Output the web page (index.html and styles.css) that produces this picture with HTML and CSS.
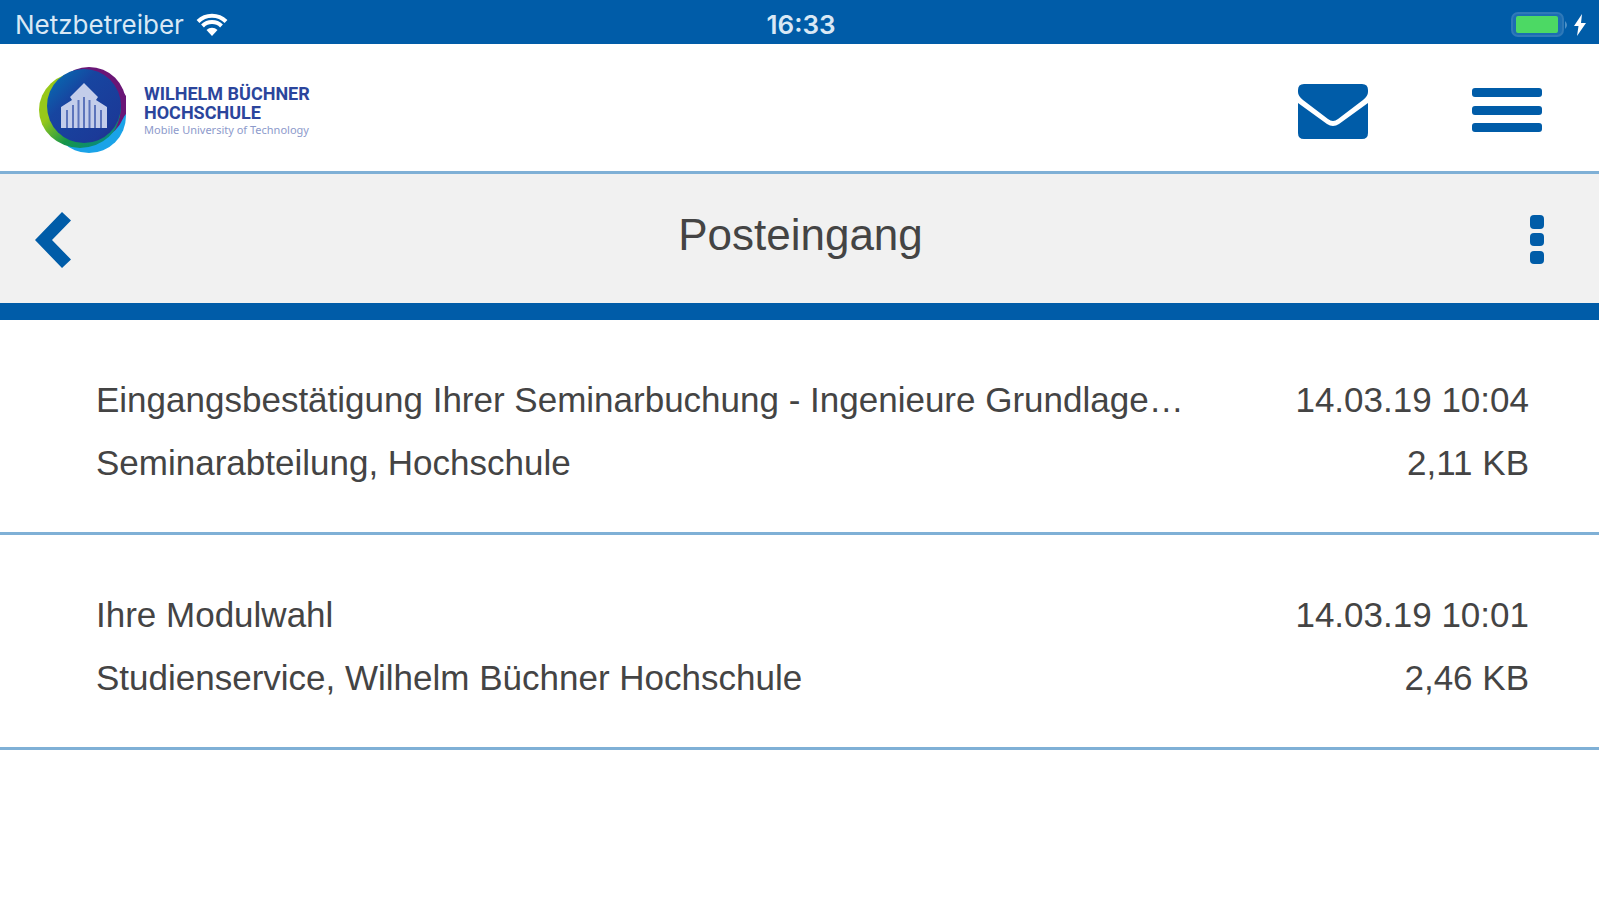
FILE: index.html
```html
<!DOCTYPE html>
<html lang="de">
<head>
<meta charset="utf-8">
<meta name="viewport" content="width=device-width, initial-scale=1">
<title>Posteingang</title>
<link rel="stylesheet" href="styles.css">
</head>
<body>
<div class="status-bar">
  <div class="status-carrier">
    <span>Netzbetreiber</span>
    <svg class="wifi-icon" viewBox="0 0 32 24" aria-hidden="true">
      <path d="M2 8.500a20 20 0 0 1 28 0" />
      <path d="M6.500 13a13.500 13.500 0 0 1 19 0" />
      <path class="wifi-dot" d="M16 23l-5.500-6a8 8 0 0 1 11 0z" />
    </svg>
  </div>
  <time class="status-time">16:33</time>
  <div class="status-power">
    <svg class="battery-icon" viewBox="0 0 58 26" aria-hidden="true">
      <rect x="1" y="1" width="51" height="23" rx="6" fill="#1c6db3" stroke="#2f79b8" stroke-width="2" />
      <rect x="5" y="4" width="42" height="17" rx="2" fill="#4cd964" />
      <path d="M54 9q4 4 0 8z" fill="#4f91c6" />
    </svg>
    <svg class="bolt-icon" viewBox="0 0 14 22" aria-hidden="true">
      <path d="M9 0L1 12h4.500L4 22l9-13H8z" />
    </svg>
  </div>
</div>

<header class="app-header">
  <a class="brand" href="#">
    <svg class="brand-mark" viewBox="0 0 90 90" aria-hidden="true">
      <defs>
        <linearGradient id="disc" x1="0" y1="0" x2="1" y2="1">
          <stop offset="0.100" stop-color="#0868b0" />
          <stop offset="0.350" stop-color="#1745a0" />
          <stop offset="0.800" stop-color="#1b3a98" />
          <stop offset="1" stop-color="#2a2380" />
        </linearGradient>
        <linearGradient id="ring" x1="0" y1="0" x2="1" y2="1">
          <stop offset="0.350" stop-color="#97c81a" />
          <stop offset="0.620" stop-color="#16964a" />
          <stop offset="0.850" stop-color="#0a8a78" />
        </linearGradient>
      </defs>
      <circle cx="51" cy="50" r="37" fill="#1aa3e8" />
      <circle cx="51" cy="38" r="37" fill="#6a1676" />
      <ellipse cx="42" cy="44" rx="41" ry="38" fill="url(#ring)" />
      <path d="M45 1A37 37 0 0 1 83 40Q83 52 78 61L88 48V30L70 4z" fill="#6a1676" clip-path="circle(37px at 51px 38px)" />
      <circle cx="46" cy="40" r="37" fill="url(#disc)" />
      <path d="M46 17L60 31L58 34L69 41V62H23V41L34 34L32 31z" fill="#c3cdea" />
      <path d="M29 44v18M35 39v23M40.500 34v28M46 31v31M51.500 34v28M57 39v23M63 44v18" stroke="#5c74bb" stroke-width="2" />
    </svg>
    <span class="brand-text">
      <strong class="brand-name">WILHELM BÜCHNER<br>HOCHSCHULE</strong>
      <small class="brand-claim">Mobile University of Technology</small>
    </span>
  </a>
  <nav class="header-actions">
    <button class="icon-button" type="button" aria-label="Nachrichten">
      <svg class="icon" viewBox="0 0 70 56" aria-hidden="true">
        <path d="M6 1h58q6 0 6 6v2q0 4-5 8L40 36q-5 4-10 0L5 17Q0 13 0 9V7Q0 1 6 1zM0 20l29 21q6 4 12 0l29-21v30q0 6-6 6H6q-6 0-6-6z" />
      </svg>
    </button>
    <button class="icon-button" type="button" aria-label="Menü">
      <svg class="icon" viewBox="0 0 70 56" aria-hidden="true">
        <rect y="5" width="70" height="9" rx="3" />
        <rect y="23" width="70" height="9" rx="3" />
        <rect y="40" width="70" height="9" rx="3" />
      </svg>
    </button>
  </nav>
</header>

<div class="toolbar">
  <button class="icon-button" type="button" aria-label="Zurück">
    <svg class="back-icon" viewBox="0 0 36 56" aria-hidden="true">
      <path d="M27 0l9 8.500L17 28l19 19.500L27 56 0 28z" />
    </svg>
  </button>
  <h1 class="toolbar-title">Posteingang</h1>
  <button class="icon-button" type="button" aria-label="Weitere Optionen">
    <svg class="more-icon" viewBox="0 0 14 50" aria-hidden="true">
      <rect width="14" height="14" rx="4" />
      <rect y="18" width="14" height="13" rx="4" />
      <rect y="36" width="14" height="13" rx="4" />
    </svg>
  </button>
</div>

<main>
  <ul class="mail-list">
    <li>
      <a class="mail" href="#">
        <span class="mail-subject">Eingangsbestätigung Ihrer Seminarbuchung - Ingenieure Grundlage…</span>
        <time class="mail-date">14.03.19 10:04</time>
        <span class="mail-sender">Seminarabteilung, Hochschule</span>
        <span class="mail-size">2,11 KB</span>
      </a>
    </li>
    <li>
      <a class="mail" href="#">
        <span class="mail-subject">Ihre Modulwahl</span>
        <time class="mail-date">14.03.19 10:01</time>
        <span class="mail-sender">Studienservice, Wilhelm Büchner Hochschule</span>
        <span class="mail-size">2,46 KB</span>
      </a>
    </li>
  </ul>
</main>
</body>
</html>
```
FILE: styles.css
```css
:root {
  --blue: #005ca8;
  --line: #7fb0d6;
  --text: #444;
}

* {
  box-sizing: border-box;
}

body {
  margin: 0;
  background: #fff;
  color: var(--text);
  font-family: "Liberation Sans", Arial, sans-serif;
}

svg {
  display: block;
}

a {
  color: inherit;
  text-decoration: none;
}

.status-bar {
  display: grid;
  grid-template-columns: 1fr auto 1fr;
  align-items: center;
  height: 44px;
  padding: 5px 12px 0 15px;
  background: var(--blue);
  color: #d9e8f5;
  font-family: Inter, "Liberation Sans", sans-serif;
  font-size: 26px;
  line-height: 32px;
}

.status-carrier {
  display: flex;
  align-items: center;
  gap: 12px;
}

.wifi-icon {
  width: 32px;
  height: 24px;
  fill: none;
  stroke: #fff;
  stroke-width: 4;
}

.wifi-dot {
  fill: #fff;
  stroke: none;
}

.status-time {
  font-weight: 600;
}

.status-power {
  display: flex;
  align-items: center;
  justify-content: flex-end;
  gap: 4px;
}

.battery-icon {
  width: 58px;
  height: 26px;
}

.bolt-icon {
  width: 14px;
  height: 22px;
  fill: #fff;
}

.app-header {
  display: flex;
  align-items: center;
  justify-content: space-between;
  height: 130px;
  padding: 6px 57px 0 38px;
  border-bottom: 3px solid var(--line);
}

.brand {
  display: flex;
  align-items: center;
  gap: 16px;
  color: #2b459c;
  font-family: Roboto, "Open Sans", sans-serif;
}

.brand-mark {
  width: 90px;
  height: 90px;
}

.brand-text {
  display: grid;
}

.brand-name {
  font-size: 18px;
  line-height: 19px;
}

.brand-claim {
  color: #8d9acb;
  font-family: "Noto Sans", "Open Sans", sans-serif;
  font-size: 11px;
  line-height: 16px;
}

.header-actions {
  display: flex;
  gap: 104px;
}

.icon-button {
  padding: 0;
  border: 0;
  background: none;
  fill: var(--blue);
  cursor: pointer;
}

.icon {
  width: 70px;
  height: 56px;
}

.toolbar {
  display: flex;
  align-items: center;
  justify-content: space-between;
  height: 146px;
  padding: 3px 55px 0 35px;
  border-bottom: 17px solid var(--blue);
  background: #f1f1f1;
}

.toolbar-title {
  margin: 0;
  padding-bottom: 11px;
  font-size: 44px;
  font-weight: 400;
  line-height: 52px;
}

.back-icon {
  width: 36px;
  height: 56px;
}

.more-icon {
  width: 14px;
  height: 50px;
}

.mail-list {
  margin: 0;
  padding: 0;
  list-style: none;
}

.mail {
  display: grid;
  grid-template-columns: minmax(0, 1fr) auto;
  column-gap: 96px;
  padding: 48px 70px 38px 96px;
  border-bottom: 3px solid var(--line);
  font-size: 35px;
  line-height: 63px;
}

.mail-subject,
.mail-sender {
  overflow: hidden;
  text-overflow: ellipsis;
  white-space: nowrap;
}

.mail-date,
.mail-size {
  text-align: right;
}
```
